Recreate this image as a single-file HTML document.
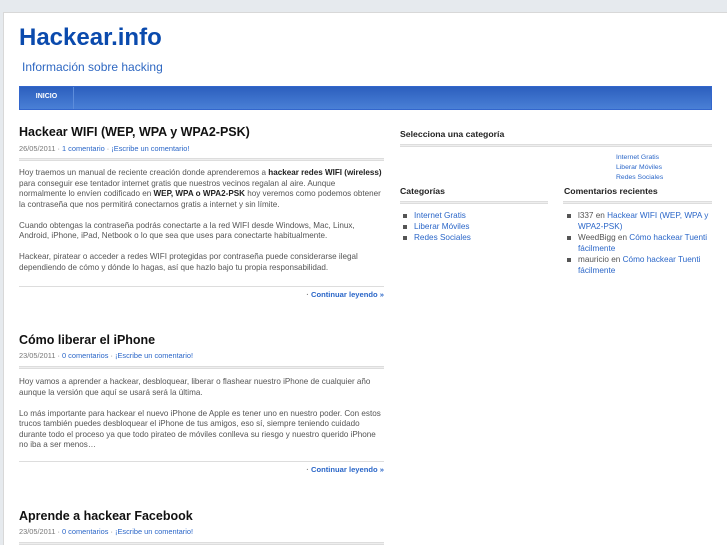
<!DOCTYPE html>
<html><head><meta charset="utf-8"><style>
*{margin:0;padding:0;box-sizing:border-box}
body{width:727px;height:545px;overflow:hidden;background:#e6eaee;font-family:"Liberation Sans",sans-serif;position:relative}
.wrap{position:absolute;left:3px;top:12px;width:724px;height:533px;background:#fff;border-top:1px solid #d8d8d8;border-left:1px solid #d8d8d8}
.a{position:absolute}
h1{position:absolute;left:19px;top:24px;font-size:24px;color:#0a4aad;font-weight:bold}
.tag{left:22px;top:60px;font-size:12px;color:#2f68c2}
.nav{left:19px;top:86px;width:693px;height:24px;background:linear-gradient(#2c5fbe,#4a80d6);border:1px solid #3366cc}
.nav span{position:absolute;left:0;top:0;width:54px;height:22px;border-right:1px solid #5d8ddb;color:#fff;font-size:7px;font-weight:bold;text-align:center;line-height:20px}
.pt{font-size:12.5px;font-weight:bold;color:#111;left:19px}
.meta{font-size:7.4px;color:#777;left:19px}
.meta b{font-weight:normal;color:#2a66c8}
.dl{left:19px;width:365px;height:3px;border-top:1px solid #ddd;border-bottom:1px solid #ddd;background:#eee}
.sl{left:19px;width:365px;height:1px;background:#ddd}
.p{left:19px;font-size:8.1px;line-height:10.5px;color:#555;white-space:nowrap}
.p strong{color:#222}
.cl{right:343px;font-size:7.6px;color:#2a66c8;font-weight:bold}
.cl i{font-style:normal;color:#888}
.sh{font-size:8.7px;font-weight:bold;color:#222}
.sd{height:3px;border-top:1px solid #ddd;border-bottom:1px solid #ddd;background:#eee}
ul{list-style:none;font-size:8.2px;line-height:11px;color:#555}
li{padding-left:14px;position:relative}
li:before{content:"";position:absolute;left:3px;top:4px;width:4px;height:4px;background:#555}
.ln{color:#2a66c8}
</style></head><body>
<div class="wrap"></div>
<h1>Hackear.info</h1>
<div class="a tag">Información sobre hacking</div>
<div class="a nav"><span>INICIO</span></div>

<div class="a pt" style="top:125px">Hackear WIFI (WEP, WPA y WPA2-PSK)</div>
<div class="a meta" style="top:144px">26/05/2011 · <b>1 comentario</b> · <b>¡Escribe un comentario!</b></div>
<div class="a dl" style="top:158px"></div>
<div class="a p" style="top:168px">Hoy traemos un manual de reciente creación donde aprenderemos a <strong>hackear redes WIFI (wireless)</strong><br>para conseguir ese tentador internet gratis que nuestros vecinos regalan al aire. Aunque<br>normalmente lo envíen codificado en <strong>WEP, WPA o WPA2-PSK</strong> hoy veremos como podemos obtener<br>la contraseña que nos permitirá conectarnos gratis a internet y sin límite.<br><br>Cuando obtengas la contraseña podrás conectarte a la red WIFI desde Windows, Mac, Linux,<br>Android, iPhone, iPad, Netbook o lo que sea que uses para conectarte habitualmente.<br><br>Hackear, piratear o acceder a redes WIFI protegidas por contraseña puede considerarse ilegal<br>dependiendo de cómo y dónde lo hagas, así que hazlo bajo tu propia responsabilidad.</div>
<div class="a sl" style="top:286px"></div>
<div class="a cl" style="top:290px"><i>·</i> Continuar leyendo »</div>

<div class="a pt" style="top:333px">Cómo liberar el iPhone</div>
<div class="a meta" style="top:351px">23/05/2011 · <b>0 comentarios</b> · <b>¡Escribe un comentario!</b></div>
<div class="a dl" style="top:366px"></div>
<div class="a p" style="top:377px">Hoy vamos a aprender a hackear, desbloquear, liberar o flashear nuestro iPhone de cualquier año<br>aunque la versión que aquí se usará será la última.<br><br>Lo más importante para hackear el nuevo iPhone de Apple es tener uno en nuestro poder. Con estos<br>trucos también puedes desbloquear el iPhone de tus amigos, eso sí, siempre teniendo cuidado<br>durante todo el proceso ya que todo pirateo de móviles conlleva su riesgo y nuestro querido iPhone<br>no iba a ser menos…</div>
<div class="a sl" style="top:461px"></div>
<div class="a cl" style="top:465px"><i>·</i> Continuar leyendo »</div>

<div class="a pt" style="top:509px">Aprende a hackear Facebook</div>
<div class="a meta" style="top:527px">23/05/2011 · <b>0 comentarios</b> · <b>¡Escribe un comentario!</b></div>
<div class="a dl" style="top:542px"></div>

<div class="a sh" style="left:400px;top:129px">Selecciona una categoría</div>
<div class="a sd" style="left:400px;top:144px;width:312px"></div>
<div class="a" style="left:616px;top:153px;font-size:6.8px;line-height:10px;color:#2a66c8">Internet Gratis<br>Liberar Móviles<br>Redes Sociales</div>

<div class="a sh" style="left:400px;top:186px">Categorías</div>
<div class="a sd" style="left:400px;top:201px;width:148px"></div>
<ul class="a" style="left:400px;top:210px"><li class="ln">Internet Gratis</li><li class="ln">Liberar Móviles</li><li class="ln">Redes Sociales</li></ul>

<div class="a sh" style="left:564px;top:186px">Comentarios recientes</div>
<div class="a sd" style="left:563px;top:201px;width:149px"></div>
<ul class="a" style="left:564px;top:210px;width:150px"><li>l337 en <span class="ln">Hackear WIFI (WEP, WPA y WPA2-PSK)</span></li><li>WeedBigg en <span class="ln">Cómo hackear Tuenti fácilmente</span></li><li>mauricio en <span class="ln">Cómo hackear Tuenti fácilmente</span></li></ul>
</body></html>
